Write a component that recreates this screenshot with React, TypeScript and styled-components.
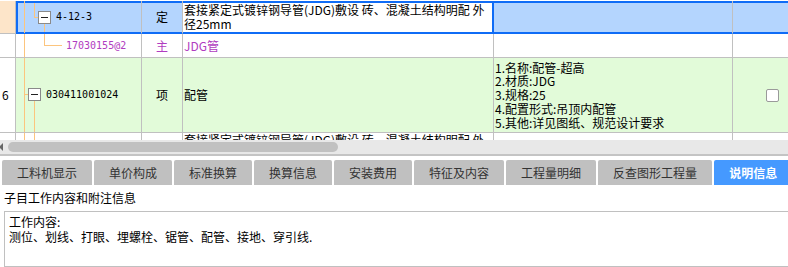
import React from "react";
import styled, { createGlobalStyle, css } from "styled-components";

const BLUE = "#0f6cf6";
const GRID = "#c0c0c0";
const TREE = "#fcc57e";
const PURPLE = "#b03cc0";

const GlobalStyle = createGlobalStyle`
  html, body { margin: 0; padding: 0; background: #fff; overflow: hidden; }
  body {
    font-family: "Noto Sans CJK SC", "Noto Sans", sans-serif;
    font-size: 12px;
    color: #000;
  }
`;

const Page = styled.div`
  width: 788px;
  height: 267px;
  overflow: hidden;
  display: flex;
  flex-direction: column;
`;

const GridArea = styled.div`
  height: 140px;
  flex: none;
  overflow: hidden;
  padding-top: 1px;
  box-sizing: border-box;
`;

const Row = styled.div<{ $h: number }>`
  display: grid;
  grid-template-columns: 16px 126px 41px 311px 239px 80px;
  height: ${(p) => p.$h}px;
`;

type Sel = "none" | "first" | "mid" | "last";

const selCss = (s: Sel) => {
  if (s === "first")
    return css`
      border-bottom-color: ${BLUE};
      box-shadow: inset 2px 2px 0 ${BLUE}, inset 0 -1px 0 ${BLUE};
    `;
  if (s === "mid")
    return css`
      border-bottom-color: ${BLUE};
      box-shadow: inset 0 2px 0 ${BLUE}, inset 0 -1px 0 ${BLUE};
    `;
  if (s === "last")
    return css`
      border-bottom-color: ${BLUE};
      border-right-color: ${BLUE};
      box-shadow: inset 0 2px 0 ${BLUE}, inset 0 -1px 0 ${BLUE}, inset -1px 0 0 ${BLUE};
    `;
  return css``;
};

const Cell = styled.div<{
  $bg?: string;
  $sel?: Sel;
  $justify?: string;
  $align?: string;
  $pl?: number;
  $pt?: number;
  $color?: string;
  $noBottom?: boolean;
}>`
  position: relative;
  box-sizing: border-box;
  border-right: 1px solid ${GRID};
  border-bottom: ${(p) => (p.$noBottom ? "none" : `1px solid ${GRID}`)};
  background: ${(p) => p.$bg || "#fff"};
  display: flex;
  align-items: ${(p) => p.$align || "center"};
  justify-content: ${(p) => p.$justify || "flex-start"};
  padding-left: ${(p) => p.$pl ?? 0}px;
  padding-top: ${(p) => p.$pt ?? 0}px;
  color: ${(p) => p.$color || "#000"};
  overflow: hidden;
  white-space: nowrap;
  line-height: 14px;
  ${(p) => selCss(p.$sel || "none")}
`;

const Code = styled.span`
  position: relative;
  font-family: "DejaVu Sans Mono", "Liberation Mono", monospace;
  font-size: 10px;
`;

const TextBlock = styled.div<{ $lh: number }>`
  display: flex;
  flex-direction: column;
  line-height: ${(p) => p.$lh}px;
`;

const TreeSvg = styled.svg`
  position: absolute;
  left: 0;
  top: 0;
  pointer-events: none;
`;

const Check = styled.span`
  width: 13px;
  height: 13px;
  box-sizing: border-box;
  border: 1px solid #9a9a9a;
  border-radius: 2px;
  background: #fff;
`;

const Expander: React.FC<{ x: number; y: number }> = ({ x, y }) => (
  <g>
    <rect x={x + 0.5} y={y + 0.5} width={12} height={12} fill="#fff" stroke="#8a8a8a" />
    <line x1={x + 3} y1={y + 6.5} x2={x + 10} y2={y + 6.5} stroke="#222" />
  </g>
);

const TreeLines: React.FC<{ h: number; children?: React.ReactNode }> = ({ h, children }) => (
  <TreeSvg width={125} height={h}>
    {children}
  </TreeSvg>
);

const Scrollbar = styled.div`
  height: 14px;
  flex: none;
  background: #e8e8e8;
  border-bottom: 2px solid #c4c4c4;
  display: flex;
  align-items: center;
`;

const Arrow = styled.span`
  width: 0;
  height: 0;
  margin-left: -1px;
  border-right: 4px solid #666;
  border-top: 4px solid transparent;
  border-bottom: 4px solid transparent;
`;

const Thumb = styled.span`
  margin-left: 5px;
  width: 330px;
  height: 10px;
  border-radius: 5px;
  background: #c1c1c1;
`;

const TabBar = styled.div`
  display: flex;
  gap: 2px;
  padding: 4px 0 0 2px;
  flex: none;
  overflow: hidden;
`;

const Tab = styled.div<{ $active?: boolean }>`
  flex: none;
  height: 25px;
  padding: 0 15px;
  display: flex;
  align-items: center;
  font-size: 12px;
  white-space: nowrap;
  border-radius: 2px 2px 0 0;
  background: ${(p) => (p.$active ? "#4599ff" : "#c0c0c0")};
  color: ${(p) => (p.$active ? "#fff" : "#333")};
  font-weight: ${(p) => (p.$active ? 700 : 400)};
`;

const Label = styled.div`
  height: 26px;
  line-height: 26px;
  padding-left: 4px;
  flex: none;
  font-size: 12px;
`;

const InfoBox = styled.div`
  flex: 1;
  margin-left: 4px;
  margin-right: -10px;
  border: 1px solid #c0c0c0;
  padding: 2px 4px;
  line-height: 15px;
  font-size: 12px;
`;

const tabs = [
  "工料机显示",
  "单价构成",
  "标准换算",
  "换算信息",
  "安装费用",
  "特征及内容",
  "工程量明细",
  "反查图形工程量",
  "说明信息",
];

const SEL_BG = "#b4d5fe";
const PEACH = "#fde5c9";
const GREEN = "#e2fbd9";

export default function App() {
  return (
    <>
      <GlobalStyle />
      <Page>
        <GridArea>
          {/* selected row */}
          <Row $h={33}>
            <Cell $bg={PEACH} />
            <Cell $bg={SEL_BG} $sel="first" $pl={40}>
              <TreeLines h={32}>
                <line x1={8.5} y1={0} x2={8.5} y2={32} stroke={TREE} />
                <line x1={18.5} y1={2} x2={18.5} y2={16.5} stroke={TREE} />
                <line x1={18} y1={16.5} x2={22} y2={16.5} stroke={TREE} />
                <line x1={28.5} y1={23} x2={28.5} y2={31} stroke={TREE} />
                <Expander x={22} y={10} />
              </TreeLines>
              <Code>4-12-3</Code>
            </Cell>
            <Cell $bg={SEL_BG} $sel="mid" $justify="center">
              定
            </Cell>
            <Cell $bg="#fff" $sel="last" $pl={1}>
              <TextBlock $lh={14}>
                <span>套接紧定式镀锌钢导管(JDG)敷设 砖、混凝土结构明配 外</span>
                <span>径25mm</span>
              </TextBlock>
            </Cell>
            <Cell $bg={SEL_BG} $sel="mid" />
            <Cell $bg={SEL_BG} $sel="mid" />
          </Row>

          {/* main material row */}
          <Row $h={24}>
            <Cell />
            <Cell $pl={50} $color={PURPLE}>
              <TreeLines h={23}>
                <line x1={8.5} y1={0} x2={8.5} y2={23} stroke={TREE} />
                <line x1={28.5} y1={0} x2={28.5} y2={11.5} stroke={TREE} />
                <line x1={28} y1={11.5} x2={46} y2={11.5} stroke={TREE} />
              </TreeLines>
              <Code>17030155@2</Code>
            </Cell>
            <Cell $justify="center" $color={PURPLE}>
              主
            </Cell>
            <Cell $pl={1} $color={PURPLE}>
              JDG管
            </Cell>
            <Cell />
            <Cell />
          </Row>

          {/* list item row */}
          <Row $h={75}>
            <Cell $pl={2}>6</Cell>
            <Cell $bg={GREEN} $pl={30}>
              <TreeLines h={74}>
                <line x1={8.5} y1={0} x2={8.5} y2={74} stroke={TREE} />
                <line x1={8} y1={36.5} x2={12} y2={36.5} stroke={TREE} />
                <line x1={18.5} y1={43} x2={18.5} y2={74} stroke={TREE} />
                <Expander x={12} y={30} />
              </TreeLines>
              <Code>030411001024</Code>
            </Cell>
            <Cell $bg={GREEN} $justify="center">
              项
            </Cell>
            <Cell $bg={GREEN} $pl={1}>
              配管
            </Cell>
            <Cell $bg={GREEN} $pl={1}>
              <TextBlock $lh={13.75}>
                <span>1.名称:配管-超高</span>
                <span>2.材质:JDG</span>
                <span>3.规格:25</span>
                <span>4.配置形式:吊顶内配管</span>
                <span>5.其他:详见图纸、规范设计要求</span>
              </TextBlock>
            </Cell>
            <Cell $bg={GREEN} $justify="center">
              <Check />
            </Cell>
          </Row>

          {/* next row, clipped by the grid viewport */}
          <Row $h={33}>
            <Cell $noBottom />
            <Cell $noBottom>
              <TreeLines h={33}>
                <line x1={8.5} y1={0} x2={8.5} y2={33} stroke={TREE} />
                <line x1={18.5} y1={0} x2={18.5} y2={33} stroke={TREE} />
              </TreeLines>
            </Cell>
            <Cell $noBottom />
            <Cell $noBottom $pl={1} $align="flex-start" $pt={0}>
              <TextBlock $lh={14}>
                <span>套接紧定式镀锌钢导管(JDG)敷设 砖、混凝土结构明配 外</span>
              </TextBlock>
            </Cell>
            <Cell $noBottom />
            <Cell $noBottom />
          </Row>
        </GridArea>

        <Scrollbar>
          <Arrow />
          <Thumb />
        </Scrollbar>

        <TabBar>
          {tabs.map((t, i) => (
            <Tab key={t} $active={i === tabs.length - 1}>
              {t}
            </Tab>
          ))}
        </TabBar>

        <Label>子目工作内容和附注信息</Label>
        <InfoBox>
          <div>工作内容:</div>
          <div>测位、划线、打眼、埋螺栓、锯管、配管、接地、穿引线.</div>
        </InfoBox>
      </Page>
    </>
  );
}
